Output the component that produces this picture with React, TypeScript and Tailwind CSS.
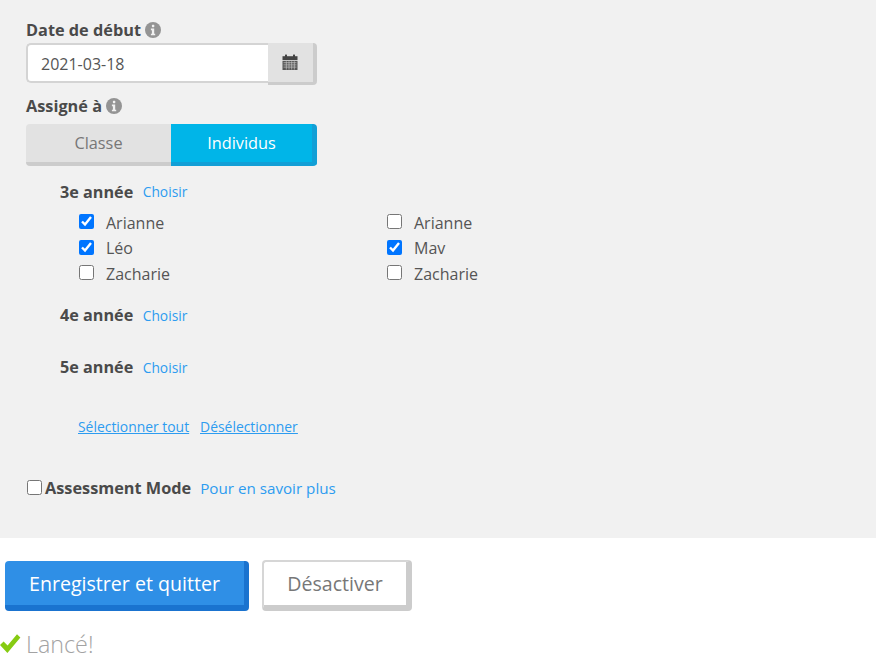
import React from "react";

const font = { fontFamily: '"Open Sans", sans-serif' };

const InfoIcon = () => (
  <svg viewBox="0 0 16 16" className="w-4 h-4 ml-1">
    <circle cx="8" cy="8" r="8" fill="#949494" />
    <rect x="6.9" y="2.8" width="2.4" height="2.4" rx="0.6" fill="#f1f1f1" />
    <path d="M5.9 6.6h3.3v5.1h1v1.6H5.9v-1.6h1v-3.5h-1z" fill="#f1f1f1" />
  </svg>
);

const CalendarIcon = () => (
  <svg viewBox="0 0 16 17" className="w-[16px] h-[17px] -ml-[2px]">
    <path d="M0.5 2.2h15v3.8H0.5z" fill="#444" />
    <rect x="3" y="0.6" width="2" height="2.6" fill="#444" />
    <rect x="11" y="0.6" width="2" height="2.6" fill="#444" />
    <path d="M0.5 6.8h15v9.2H0.5z" fill="#555" />
    <path d="M1.5 8.7h13M1.5 10.9h13M1.5 13.1h13M4.3 7.2v8.4M7 7.2v8.4M9.7 7.2v8.4M12.3 7.2v8.4" stroke="#c4c4c4" strokeWidth="0.7" />
  </svg>
);

const Student = ({ name, checked }: { name: string; checked?: boolean }) => (
  <label className="flex items-center h-[25.5px]">
    <input type="checkbox" defaultChecked={checked} className="w-[15px] h-[15px] m-0 -mt-[2px]" />
    <span className="ml-[12px] text-[16px] text-[#555]">{name}</span>
  </label>
);

const GradeHead = ({ title }: { title: string }) => (
  <div className="flex items-center h-5 pl-[34px]">
    <span className="font-bold text-[16.2px] text-[#4a4a4a]">{title}</span>
    <a className="ml-[9.5px] pt-px text-[13.8px] text-[#2d9cf0]">Choisir</a>
  </div>
);

export default function App() {
  return (
    <div className="w-[876px] h-[666px] bg-white overflow-hidden" style={font}>
      <div className="bg-[#f1f1f1] h-[538px] pl-[26px] pt-[20px]">
        <div className="flex items-center h-5">
          <span className="font-bold text-[16.3px] text-[#4a4a4a]">Date de début</span>
          <InfoIcon />
        </div>
        <div className="flex w-[291px] h-[42px] mt-[3px]">
          <div className="w-[242px] h-[40px] pt-px bg-white border-2 border-r-0 border-[#d4d4d4] rounded-l-[5px] pl-[13px] flex items-center text-[16px] text-[#555]">
            2021-03-18
          </div>
          <div className="flex-1 h-[42px] bg-[#e2e2e2] border-r-[4px] border-b-[3px] border-[#cccccc] rounded-r-[4px] flex items-center justify-center">
            <CalendarIcon />
          </div>
        </div>
        <div className="flex items-center h-5 mt-[11px]">
          <span className="font-bold text-[16.3px] text-[#4a4a4a]">Assigné à</span>
          <InfoIcon />
        </div>
        <div className="flex w-[291px] h-[42px] mt-[8px] text-[16.3px]">
          <div className="w-[145px] bg-[#e2e2e2] border-b-[4px] border-[#cccccc] rounded-l-[4px] flex items-center justify-center text-[#777]">
            Classe
          </div>
          <div className="flex-1 bg-[#00b5e8] border-r-[5px] border-b-[4px] border-[#129fd6] rounded-r-[4px] flex items-center justify-center text-white font-medium">
            Individus
          </div>
        </div>

        <div className="mt-[16px]">
          <GradeHead title="3e année" />
          <div className="flex pl-[53px] mt-[8px]">
            <div className="w-[308px]">
              <Student name="Arianne" checked />
              <Student name="Léo" checked />
              <Student name="Zacharie" />
            </div>
            <div>
              <Student name="Arianne" />
              <Student name="Mav" checked />
              <Student name="Zacharie" />
            </div>
          </div>
        </div>
        <div className="mt-[19px]">
          <GradeHead title="4e année" />
        </div>
        <div className="mt-[32px]">
          <GradeHead title="5e année" />
        </div>

        <div className="flex pl-[52px] mt-[40px] h-5 items-center gap-[11px] text-[13.9px] text-[#2d9cf0] underline">
          <a>Sélectionner tout</a>
          <a>Désélectionner</a>
        </div>

        <div className="flex items-center h-5 mt-[41px] pl-px">
          <input type="checkbox" className="w-[15px] h-[15px] m-0 -mt-[3px]" />
          <span className="ml-[3px] font-bold text-[16.3px] text-[#4a4a4a]">Assessment Mode</span>
          <a className="ml-[9px] text-[15.2px] text-[#2d9cf0]">Pour en savoir plus</a>
        </div>
      </div>

      <div className="flex items-start pl-[5px] pt-[22px]">
        <button className="w-[244px] h-[50px] mt-px pt-px bg-[#2f8fe6] border-r-[5px] border-b-[6px] border-[#1a73cf] rounded-[4px] text-white text-[19.6px]">
          Enregistrer et quitter
        </button>
        <button className="w-[150px] h-[51px] ml-[13px] bg-white border-2 border-[#d6d6d6] border-r-[6px] border-b-[6px] border-r-[#cccccc] border-b-[#cccccc] rounded-[4px] text-[#777] text-[19.6px]">
          Désactiver
        </button>
      </div>

      <div className="flex items-center mt-[19px] h-7 -ml-px">
        <svg viewBox="0 0 22 21" className="w-[22px] h-[21px] -mt-[2px]">
          <path d="M1 12l3.6-3.6 4 4L18 1.2l3.4 3.4L8.4 20z" fill="#86cb12" />
        </svg>
        <span className="ml-[5px] text-[23.3px] font-light text-[#a3a3a3]">Lancé!</span>
      </div>
    </div>
  );
}
